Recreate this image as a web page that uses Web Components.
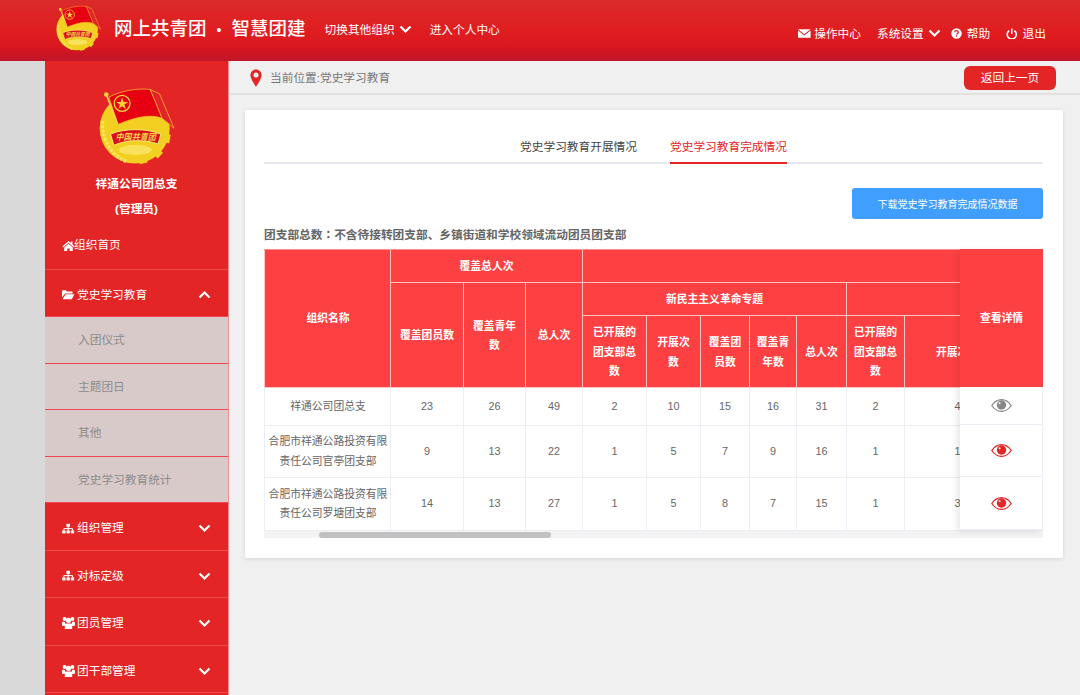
<!DOCTYPE html>
<html lang="zh">
<head>
<meta charset="utf-8">
<title>党史学习教育</title>
<style>
    html, body { margin: 0; height: 100%; overflow: hidden; }
    body {
        background: #f0f0f0;
        font: 11.7px/1.5 "Liberation Sans", "Noto Sans CJK SC", sans-serif;
        color: #666;
    }
    .layout { display: flex; height: 634px; }
    .gutter { flex: 0 0 45px; background: #d9d9d9; }
</style>
</head>
<body>
<app-header></app-header>
<div class="layout">
    <div class="gutter"></div>
    <side-nav>
        <nav-item icon="home" tight>组织首页</nav-item>
        <nav-item icon="folder" arrow="up">党史学习教育</nav-item>
        <sub-item>入团仪式</sub-item>
        <sub-item>主题团日</sub-item>
        <sub-item>其他</sub-item>
        <sub-item>党史学习教育统计</sub-item>
        <nav-item icon="sitemap" arrow="down">组织管理</nav-item>
        <nav-item icon="sitemap" arrow="down">对标定级</nav-item>
        <nav-item icon="group" arrow="down">团员管理</nav-item>
        <nav-item icon="group" arrow="down">团干部管理</nav-item>
    </side-nav>
    <page-main>
        <stats-panel></stats-panel>
    </page-main>
</div>

<script>
const ICONS = {
    down: '<path d="M1.5 2.5 6.5 7.5 11.5 2.5" fill="none" stroke="currentColor" stroke-width="2.2"/>',
    up: '<path d="M1.5 7.5 6.5 2.5 11.5 7.5" fill="none" stroke="currentColor" stroke-width="2.2"/>',
    mail: '<path d="M0 1.2h12.6L6.3 6.2z" fill="currentColor"/><path d="M0 2.6v7.2h12.6V2.6L6.3 7.6z" fill="currentColor"/>',
    help: '<circle cx="5.5" cy="5.5" r="5.2" fill="currentColor"/><path d="M3.7 4.3C3.8 3.2 4.5 2.7 5.5 2.7s1.8.6 1.8 1.5c0 1.2-1.7 1.3-1.7 2.4" fill="none" stroke="#dc1c22" stroke-width="1.3"/><rect x="4.9" y="7.4" width="1.3" height="1.3" fill="#dc1c22"/>',
    power: '<path d="M3.2 2.6A4.6 4.6 0 1 0 8.4 2.6" fill="none" stroke="currentColor" stroke-width="1.6"/><path d="M5.8 .5V5.8" fill="none" stroke="currentColor" stroke-width="1.6"/>',
    home: '<path d="M6.5 1 .3 6.6l.8.8L6.5 2.7l5.4 4.7.8-.8-2.2-2V1.5H8.8v1.6z" fill="currentColor"/><path d="M2.2 7.5 6.5 3.8l4.3 3.7v3.8H7.7V8.4H5.3v2.9H2.2z" fill="currentColor"/>',
    folder: '<path d="M0 2.2C0 1.6.4 1.2 1 1.2h3l1 1.3h4.6c.6 0 1 .4 1 1V4.4H3L0 8.6z" fill="currentColor"/><path d="M3.5 5.3h8.9L9.8 10.3H.6z" fill="currentColor"/>',
    sitemap: '<rect x="4.4" y=".8" width="3.6" height="3" fill="currentColor"/><rect x=".2" y="7.4" width="3.3" height="3" fill="currentColor"/><rect x="4.5" y="7.4" width="3.3" height="3" fill="currentColor"/><rect x="8.8" y="7.4" width="3.3" height="3" fill="currentColor"/><path d="M6.2 3.8v3.6M1.9 7.4V5.6h8.6v1.8" fill="none" stroke="currentColor"/>',
    group: '<g fill="currentColor"><circle cx="2.6" cy="2.1" r="2"/><circle cx="10.4" cy="2.1" r="2"/><circle cx="6.5" cy="3.3" r="2.6"/><rect x="0" y="4.8" width="3.1" height="4.2" rx="1"/><rect x="9.9" y="4.8" width="3.1" height="4.2" rx="1"/><path d="M3.9 6.400H9.100C9.800 6.400 10.200 7 10.200 7.800V12H2.800V7.800C2.800 7 3.200 6.400 3.900 6.400Z"/></g>'
};

const iconSvg = (name, w, h, vb) =>
    `<svg width="${w}" height="${h}" viewBox="${vb}" aria-hidden="true" style="display:block;flex:none">${ICONS[name]}</svg>`;

const emblemSvg = (w, h) => `
    <svg width="${w}" height="${h}" viewBox="175 48 230 235" style="display:block">
        <g fill="#f3cf21">
            <circle cx="283" cy="173" r="106"/>
            <rect x="368" y="190" width="22" height="26" transform="rotate(10 379 203)"/>
            <rect x="340" y="235" width="24" height="24" transform="rotate(42 352 247)"/>
            <rect x="296" y="258" width="24" height="21" transform="rotate(-12 308 268)"/>
        </g>
        <path d="M186 150C182 200 208 256 262 274" fill="none" stroke="#fae65c" stroke-width="10" stroke-dasharray="9 4"/>
        <ellipse cx="285" cy="238" rx="50" ry="15" fill="#f8e25c"/>
        <path d="M205 78C240 60 290 50 330 55C345 85 355 115 366 142C330 128 280 140 232 161Z" fill="#e60012" stroke="#f5b22e" stroke-width="2.500"/>
        <path d="M330 55 358 68 402 172 366 142Z" fill="#e2232b" stroke="#f5b22e" stroke-width="2.500"/>
        <path d="M197 70 232 161" stroke="#f6d23a" stroke-width="5"/>
        <circle cx="197" cy="70" r="7" fill="#f6d23a"/>
        <circle cx="245" cy="97" r="24" fill="#e60012" stroke="#f6d23a" stroke-width="4"/>
        <path d="M245 79 249.500 92.500H263L252 100.500 256 114 245 105.500 234 114 238 100.500 227 92.500H240.500Z" fill="#f6d23a"/>
        <path d="M210 190C250 172 320 172 362 190L354 220C320 206 255 206 220 224Z" fill="#d8101a" stroke="#f9e873" stroke-width="3"/>
        <text x="286" y="207" text-anchor="middle" font-size="26" font-weight="700" font-style="italic" fill="#f3d24a" textLength="122" lengthAdjust="spacingAndGlyphs" font-family="Noto Sans CJK SC, sans-serif">中国共青团</text>
    </svg>`;

class AppHeader extends HTMLElement {
    constructor() {
        super();
        this.attachShadow({ mode: "open" });
    }

    connectedCallback() {
        this.shadowRoot.innerHTML = `
            <style>
                :host {
                    display: flex;
                    align-items: center;
                    height: 61px;
                    box-sizing: border-box;
                    padding: 0 34px 1px 56px;
                    color: #fff;
                    background: linear-gradient(#da2a2a, #e01e20 50%, #d9171f 75%, #c2152a);
                    white-space: nowrap;
                }
                .logo { margin: -5px 13px 0 0; }
                .title { font-size: 18.5px; font-weight: 500; margin-right: 19px; margin-top: -2px; }
                .dot { display: inline-block; width: 25px; text-align: center; font-size: 14px; }
                .link { display: flex; align-items: center; gap: 4px; }
                .left { display: flex; align-items: center; margin-top: -1px; }
                .right { display: flex; align-items: center; margin-left: auto; margin-top: 7px; }
                .item { display: flex; align-items: center; gap: 3px; }
            </style>
            <div class="logo">${emblemSvg(45, 46)}</div>
            <div class="title">网上共青团<span class="dot">•</span>智慧团建</div>
            <div class="left">
                <div class="link">切换其他组织 ${iconSvg("down", 13, 10, "0 0 13 10")}</div>
                <div class="link" style="margin-left:18px">进入个人中心</div>
            </div>
            <div class="right">
                <div class="item">${iconSvg("mail", 13, 11, "0 0 13 11")}操作中心</div>
                <div class="item" style="margin-left:16px;gap:4px">系统设置${iconSvg("down", 13, 10, "0 0 13 10")}</div>
                <div class="item" style="margin-left:10px;gap:5px">${iconSvg("help", 11, 11, "0 0 11 11")}帮助</div>
                <div class="item" style="margin-left:16px;gap:5px">${iconSvg("power", 11.5, 11, "0 0 11.6 11")}退出</div>
            </div>
        `;
    }
}

class SideNav extends HTMLElement {
    constructor() {
        super();
        this.attachShadow({ mode: "open" });
    }

    connectedCallback() {
        this.shadowRoot.innerHTML = `
            <style>
                :host {
                    display: block;
                    flex: 0 0 184px;
                    box-sizing: border-box;
                    background: #e32526;
                    border-right: 1px solid #ee8f8f;
                    overflow: hidden;
                }
                .profile {
                    display: flex;
                    flex-direction: column;
                    align-items: center;
                    padding-top: 26px;
                    height: 161px;
                    box-sizing: border-box;
                    color: #fff;
                    font-weight: 700;
                    line-height: 25px;
                }
                .emblem { margin-bottom: 6px; }
            </style>
            <div class="profile">
                <div class="emblem">${emblemSvg(76, 78)}</div>
                <div>祥通公司团总支</div>
                <div>(管理员)</div>
            </div>
            <slot></slot>
        `;
    }
}

class NavItem extends HTMLElement {
    constructor() {
        super();
        this.attachShadow({ mode: "open" });
    }

    connectedCallback() {
        const icon = this.getAttribute("icon");
        const arrow = this.getAttribute("arrow");
        const vb = icon === "group" ? "0 0 13 12" : "0 0 13 11";
        this.shadowRoot.innerHTML = `
            <style>
                :host {
                    display: flex;
                    align-items: center;
                    height: 47.5px;
                    box-sizing: border-box;
                    padding: 4px 17px 0 17px;
                    color: #fff;
                    border-bottom: 1px solid #ee4a4d;
                }
                :host([tight]) { padding-top: 0; }
                .label { margin-left: 2px; flex: 1; }
                :host([tight]) .label { margin-left: -1px; }
            </style>
            ${iconSvg(icon, 13, icon === "group" ? 12 : 11, vb)}
            <span class="label"><slot></slot></span>
            ${arrow ? iconSvg(arrow, 13, 10, "0 0 13 10") : ""}
        `;
    }
}

class SubItem extends HTMLElement {
    constructor() {
        super();
        this.attachShadow({ mode: "open" });
    }

    connectedCallback() {
        this.shadowRoot.innerHTML = `
            <style>
                :host {
                    display: flex;
                    align-items: center;
                    height: 46.5px;
                    box-sizing: border-box;
                    padding: 1px 0 0 33px;
                    background: #d9caca;
                    color: #8c8c8c;
                    border-bottom: 1px solid #f4444f;
                }
            </style>
            <slot></slot>
        `;
    }
}

class PageMain extends HTMLElement {
    constructor() {
        super();
        this.attachShadow({ mode: "open" });
    }

    connectedCallback() {
        this.shadowRoot.innerHTML = `
            <style>
                :host { display: block; flex: 1; min-width: 0; }
                .crumb {
                    display: flex;
                    align-items: center;
                    height: 34px;
                    box-sizing: border-box;
                    padding: 0 24px 0 21px;
                    border-bottom: 2px solid #e2e2e2;
                }
                .pin { display: block; flex: none; margin-top: 2px; }
                .path { margin: 2px 0 0 8px; color: #777; flex: 1; }
                button {
                    width: 92px;
                    height: 24px;
                    margin-top: 2px;
                    padding: 0;
                    border: 0;
                    border-radius: 6px;
                    background: #e32526;
                    color: #fff;
                    font: inherit;
                }
                .body { padding: 15px 17px 15px 16px; }
            </style>
            <div class="crumb">
                <svg class="pin" width="12" height="18" viewBox="0 0 12 18">
                    <path d="M6 .4C2.700.4.400 3 .400 6 .400 10 6 17.700 6 17.700S11.600 10 11.600 6C11.600 3 9.300.400 6 .400Z" fill="#e32526"/>
                    <circle cx="6" cy="6" r="2.500" fill="#f0f0f0"/>
                </svg>
                <span class="path">当前位置:党史学习教育</span>
                <button>返回上一页</button>
            </div>
            <div class="body"><slot></slot></div>
        `;
    }
}

class StatsPanel extends HTMLElement {
    constructor() {
        super();
        this.attachShadow({ mode: "open" });
    }

    connectedCallback() {
        this.shadowRoot.innerHTML = `
            <style>
                :host {
                    display: block;
                    box-sizing: border-box;
                    padding: 20px 20px 20px 19px;
                    background: #fff;
                    box-shadow: 0 1px 4px rgba(0, 0, 0, .12);
                    border-radius: 2px;
                }
                .tabs {
                    display: flex;
                    justify-content: center;
                    gap: 33px;
                    height: 34px;
                    box-sizing: border-box;
                    border-bottom: 2px solid #e6e8ef;
                }
                .tab { height: 34px; box-sizing: border-box; line-height: 33px; color: #444; }
                .tab.on { color: #e32526; border-bottom: 2px solid #e32526; }
                .tools { display: flex; justify-content: flex-end; margin-top: 24px; }
                .download {
                    width: 191px;
                    height: 31px;
                    padding: 0;
                    border: 0;
                    border-radius: 3px;
                    background: #409eff;
                    color: #fff;
                    font: 10px "Liberation Sans", "Noto Sans CJK SC", sans-serif;
                }
                .note { margin: 6px 0 6px; height: 18px; line-height: 18px; font-weight: 700; color: #666; }
                .colon { font-family: "Noto Sans CJK TC", sans-serif; }
            </style>
            <div class="tabs">
                <div class="tab">党史学习教育开展情况</div>
                <div class="tab on">党史学习教育完成情况</div>
            </div>
            <div class="tools"><button class="download">下载党史学习教育完成情况数据</button></div>
            <div class="note">团支部总数<span class="colon" lang="zh-Hant">：</span>不含待接转团支部、乡镇街道和学校领域流动团员团支部</div>
            <stats-table></stats-table>
        `;
    }
}

class StatsTable extends HTMLElement {
    constructor() {
        super();
        this.attachShadow({ mode: "open" });
    }

    get rows() {
        return [
            { name: "祥通公司团总支", nums: [23, 26, 49, 2, 10, 15, 16, 31, 2, 4], h: 38, active: false },
            { name: "合肥市祥通公路投资有限责任公司官亭团支部", nums: [9, 13, 22, 1, 5, 7, 9, 16, 1, 1], h: 52, active: true },
            { name: "合肥市祥通公路投资有限责任公司罗塘团支部", nums: [14, 13, 27, 1, 5, 8, 7, 15, 1, 3], h: 53, active: true }
        ];
    }

    render() {
        const cols = [126, 73, 62, 57, 64, 54, 49, 47, 50, 58, 106, 40];
        const eye = (color) => `
            <svg width="21" height="13" viewBox="0 0 21 13" style="display:block">
                <path d="M.8 6.500C4 1.700 7 .7 10.500 .7S17 1.700 20.200 6.500C17 11.300 14 12.300 10.500 12.300S4 11.300 .8 6.500Z" fill="none" stroke="${color}" stroke-width="1.300"/>
                <circle cx="10.500" cy="6" r="4.700" fill="${color}"/>
                <circle cx="8.600" cy="4.300" r="1" fill="#fff"/>
            </svg>`;

        this.shadowRoot.innerHTML = `
            <style>
                :host { display: block; position: relative; font-size: 10.8px; line-height: 19.5px; }
                .clip { overflow: hidden; width: 779px; }
                table { border-collapse: collapse; table-layout: fixed; width: 786px; }
                th, td { padding: 0 6px; text-align: center; box-sizing: border-box; }
                th { background: #fd4142; color: #fff; font-weight: 700; border: 1px solid #ffc4c4; padding-top: 2px; }
                tr:first-child th { border-top-color: #fb8d8d; }
                td { border: 1px solid #eceef5; color: #666; background: #fff; }
                td:first-child { padding-left: 3px; padding-right: 2px; position: relative; z-index: 1; box-shadow: 2px 0 3px rgba(60, 70, 110, .08); }
                th.name { padding: 0 2px 0 3px; }
                th.narrow { padding-left: 8px; padding-right: 8px; }
                .fixed {
                    position: absolute;
                    top: 0;
                    right: 0;
                    width: 83px;
                    display: flex;
                    flex-direction: column;
                    background: #fff;
                    box-shadow: -3px 2px 7px rgba(0, 0, 0, .09);
                }
                .fixed .head {
                    height: 138px;
                    padding-top: 2px;
                    box-sizing: border-box;
                    display: flex;
                    align-items: center;
                    justify-content: center;
                    background: #fd4142;
                    color: #fff;
                    font-weight: 700;
                }
                .fixed .cell {
                    display: flex;
                    align-items: center;
                    justify-content: center;
                    box-sizing: border-box;
                    border-bottom: 1px solid #eceef5;
                    border-right: 1px solid #eceef5;
                }
                .bar { height: 7px; background: #f3f3f4; }
                .thumb { width: 232px; height: 6px; margin-left: 55px; border-radius: 3px; background: #c1c1c1; position: relative; top: 1px; }
            </style>
            <div class="clip">
                <table>
                    <colgroup>${cols.map((w) => `<col style="width:${w}px">`).join("")}</colgroup>
                    <thead>
                        <tr style="height:33px">
                            <th class="name" rowspan="3">组织名称</th>
                            <th colspan="3">覆盖总人次</th>
                            <th colspan="8"></th>
                        </tr>
                        <tr style="height:33px">
                            <th rowspan="2">覆盖团员数</th>
                            <th rowspan="2">覆盖青年数</th>
                            <th rowspan="2">总人次</th>
                            <th colspan="5">新民主主义革命专题</th>
                            <th colspan="3"></th>
                        </tr>
                        <tr style="height:72px">
                            <th class="narrow">已开展的团支部总数</th>
                            <th>开展次数</th>
                            <th>覆盖团员数</th>
                            <th>覆盖青年数</th>
                            <th>总人次</th>
                            <th>已开展的团支部总数</th>
                            <th>开展次数</th>
                            <th></th>
                        </tr>
                    </thead>
                    <tbody>
                        ${this.rows.map((r) => `
                            <tr style="height:${r.h}px">
                                <td>${r.name}</td>
                                ${r.nums.map((n) => `<td>${n}</td>`).join("")}
                                <td></td>
                            </tr>`).join("")}
                    </tbody>
                </table>
            </div>
            <div class="bar"><div class="thumb"></div></div>
            <div class="fixed">
                <div class="head">查看详情</div>
                ${this.rows.map((r) => `<div class="cell" style="height:${r.h}px">${eye(r.active ? "#e32526" : "#888")}</div>`).join("")}
            </div>
        `;
    }

    connectedCallback() {
        this.render();
    }
}

customElements.define("app-header", AppHeader);
customElements.define("side-nav", SideNav);
customElements.define("nav-item", NavItem);
customElements.define("sub-item", SubItem);
customElements.define("page-main", PageMain);
customElements.define("stats-panel", StatsPanel);
customElements.define("stats-table", StatsTable);
</script>
</body>
</html>
